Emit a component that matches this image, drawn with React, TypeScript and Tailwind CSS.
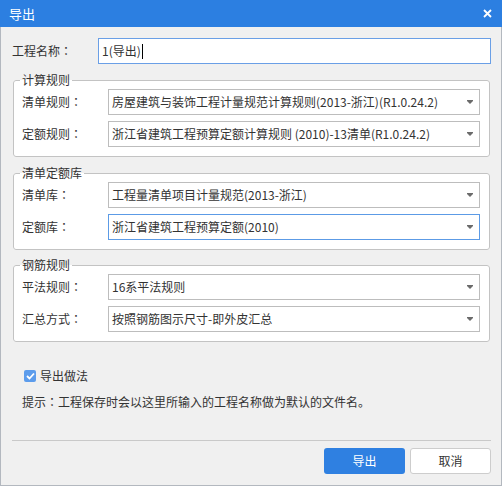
import React from "react";
import clsx from "clsx";

// Full-width colon drawn centred in its cell
function Colon() {
  return <span className="font-['Noto_Sans_CJK_TC','Noto_Sans_CJK_SC',sans-serif]">：</span>;
}

function Arrow() {
  return (
    <svg width="6" height="4" viewBox="0 0 6 4" className="shrink-0">
      <path d="M0 0H6V1L3 4L0 1Z" fill="#6b6b6b" />
    </svg>
  );
}

function Select({ value, focused }: { value: string; focused?: boolean }) {
  return (
    <div
      className={clsx(
        "flex h-[26px] flex-1 items-center justify-between border bg-white pl-[3px] pr-[6px]",
        focused ? "border-[#5c9be6]" : "border-[#bdbdbd]"
      )}
    >
      <span className="whitespace-nowrap">{value}</span>
      <Arrow />
    </div>
  );
}

function Row({ label, value, focused }: { label: string; value: string; focused?: boolean }) {
  return (
    <div className="flex items-center">
      <span className="w-[86px] shrink-0">
        {label}
        <Colon />
      </span>
      <Select value={value} focused={focused} />
    </div>
  );
}

function Group({ title, children, className }: { title: string; children: React.ReactNode; className?: string }) {
  return (
    <fieldset
      className={clsx(
        "ml-[1px] mr-[1px] rounded-[3px] border border-[#c3c3c3] bg-white pb-[9px] pl-[8px] pr-[9px] pt-[1px]",
        className
      )}
    >
      <legend className="-ml-[2px] px-[2px] leading-[16px]">{title}</legend>
      <div className="flex flex-col gap-[6px]">{children}</div>
    </fieldset>
  );
}

export default function App() {
  return (
    <div className="flex h-[486px] w-[502px] flex-col bg-[#f0f0f0] font-['Noto_Sans_CJK_SC','Microsoft_YaHei',sans-serif] text-[12px] text-[#333]">
      {/* title bar */}
      <div className="flex h-[27px] shrink-0 items-center justify-between bg-[#2c7fe1] pl-[9px] pr-[10px] text-white">
        <span className="text-[13px]">导出</span>
        <svg width="9" height="9" viewBox="0 0 9 9">
          <path d="M1 1L8 8M8 1L1 8" stroke="#fff" strokeWidth="1.8" />
        </svg>
      </div>

      <div className="flex flex-1 flex-col border-x border-b border-[#b3b8bf] pl-[11px] pr-[10px]">
        {/* project name */}
        <div className="mt-[11px] flex items-center">
          <span className="w-[86px] shrink-0">
            工程名称
            <Colon />
          </span>
          <div className="flex h-[26px] flex-1 items-center border border-[#6a9fe6] bg-white pl-[3px]">
            <span>1(导出)</span>
            <span className="ml-[1px] h-[15px] w-[1px] bg-black" />
          </div>
        </div>

        <Group title="计算规则" className="mt-[8px]">
          <Row label="清单规则" value="房屋建筑与装饰工程计量规范计算规则(2013-浙江)(R1.0.24.2)" />
          <Row label="定额规则" value="浙江省建筑工程预算定额计算规则 (2010)-13清单(R1.0.24.2)" />
        </Group>

        <Group title="清单定额库" className="mt-[8px]">
          <Row label="清单库" value="工程量清单项目计量规范(2013-浙江)" />
          <Row label="定额库" value="浙江省建筑工程预算定额(2010)" focused />
        </Group>

        <Group title="钢筋规则" className="mt-[7px]">
          <Row label="平法规则" value="16系平法规则" />
          <Row label="汇总方式" value="按照钢筋图示尺寸-即外皮汇总" />
        </Group>

        {/* export option */}
        <div className="ml-[12px] mt-[25px] flex h-[17px] items-center gap-[4px]">
          <span className="flex h-[12px] w-[12px] items-center justify-center rounded-[2px] bg-[#5c9cec]">
            <svg width="9" height="8" viewBox="0 0 9 8">
              <path d="M1 4L3.5 6.5L8 1.5" stroke="#fff" strokeWidth="1.8" fill="none" />
            </svg>
          </span>
          <span>导出做法</span>
        </div>

        <div className="ml-[10px] mt-[9px] leading-[17px]">
          提示
          <Colon />
          工程保存时会以这里所输入的工程名称做为默认的文件名。
        </div>

        <div className="flex-1" />

        {/* footer */}
        <div className="flex justify-end gap-[5px] border-t border-[#c9c9c9] pb-[11px] pt-[7px]">
          <button className="h-[26px] w-[81px] rounded-[3px] bg-[#2f80e1] text-white">导出</button>
          <button className="h-[26px] w-[81px] rounded-[3px] border border-[#cdcdcd] bg-white">取消</button>
        </div>
      </div>
    </div>
  );
}
